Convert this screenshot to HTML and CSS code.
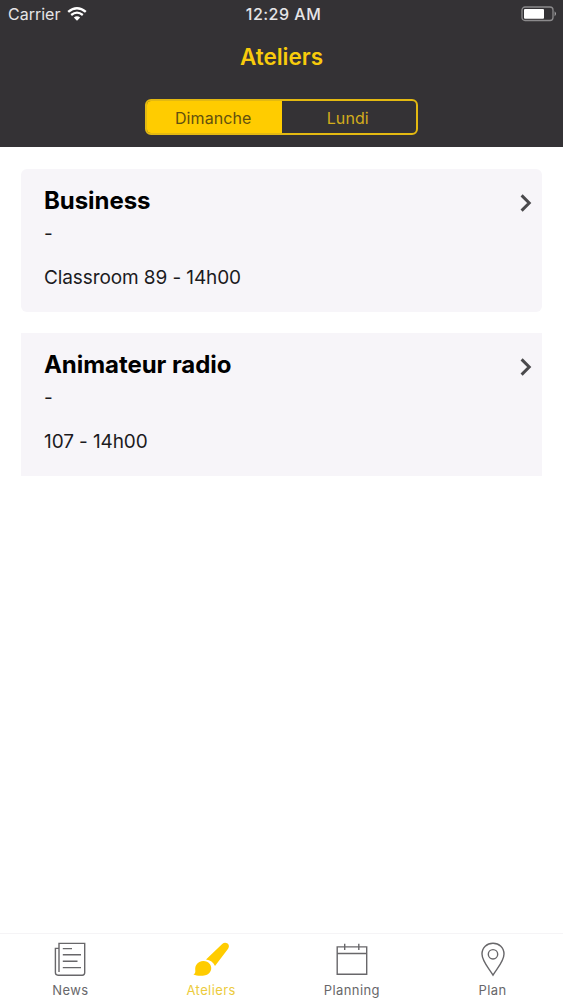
FILE: index.html
```html
<!DOCTYPE html>
<html lang="fr">

<head>
    <meta charset="UTF-8">
    <meta name="viewport" content="width=device-width, initial-scale=1.0">
    <title>Ateliers</title>
    <link rel="stylesheet" href="styles.css">
</head>

<body>
    <header>
        <div class="status">
            <div class="carrier">
                <span>Carrier</span>
                <svg width="20" height="14" viewBox="0 0 20 14">
                    <path d="M1.2 4.9 Q10 -2.3 18.8 4.9" fill="none" stroke="#fff" stroke-width="2.5" />
                    <path d="M4.2 8 Q10 3.3 15.8 8" fill="none" stroke="#fff" stroke-width="2.3" />
                    <path d="M6.8 10.5 Q10 8 13.2 10.5 L10 13.7 Z" fill="#fff" />
                </svg>
            </div>
            <span class="time">12:29 AM</span>
            <svg class="battery" width="36" height="16" viewBox="0 0 36 16">
                <rect x="1" y="1" width="31" height="13.5" rx="3" fill="none" stroke="#8b8a8c" stroke-width="1.3" />
                <rect x="3" y="3" width="20" height="9.8" rx="1" fill="#fff" />
                <path d="M33.6 5.3 Q36.4 7.8 33.6 10.4 Z" fill="#a5a4a6" />
            </svg>
        </div>
        <h1>Ateliers</h1>
        <div class="segments">
            <button class="active">Dimanche</button>
            <button>Lundi</button>
        </div>
    </header>

    <main>
        <article class="rounded">
            <div>
                <h2>Business</h2>
                <p class="speaker">-</p>
                <p class="place">Classroom 89 - 14h00</p>
            </div>
            <svg class="chevron" width="12" height="18" viewBox="0 0 12 18">
                <path d="M1.6 1.4 L9.2 9 L1.6 16.6" fill="none" stroke="#4a494c" stroke-width="3" />
            </svg>
        </article>
        <article>
            <div>
                <h2>Animateur radio</h2>
                <p class="speaker">-</p>
                <p class="place">107 - 14h00</p>
            </div>
            <svg class="chevron" width="12" height="18" viewBox="0 0 12 18">
                <path d="M1.6 1.4 L9.2 9 L1.6 16.6" fill="none" stroke="#4a494c" stroke-width="3" />
            </svg>
        </article>
    </main>

    <nav>
        <a>
            <svg width="40" height="40" viewBox="0 0 40 40">
                <path d="M9 32V3.4H34.7V32.8Q34.7 35.2 32.3 35.2H8Q5.4 35.2 5.4 32.6V8.4H9" />
                <path d="M12.8 8.6H22M12.8 14.8H31M12.8 21.2H27.5M12.8 27.6H31" />
            </svg>
            <span>News</span>
        </a>
        <a class="active">
            <svg width="40" height="40" viewBox="0 0 40 40">
                <path class="fill" d="M15 19.6 L31.2 4 C34.8 .8 40 4.7 37.1 8.7 L24 26 C22.4 22.4 19.2 20.2 15 19.6 Z" />
                <path class="fill" d="M2.4 34.5 C6.3 32.5 2.7 29.4 5.2 25 C8.4 19.7 15.8 19.9 19 24.2 C22 28.8 19.3 34.1 14.3 35.2 C9.8 36.2 5.7 35.8 2.4 34.5 Z" />
            </svg>
            <span>Ateliers</span>
        </a>
        <a>
            <svg width="40" height="40" viewBox="0 0 40 40">
                <path d="M5.2 6.9H34.7V34.3H5.2ZM5.2 13.5H34.7M12.7 3.7V10M26.8 3.7V10" />
            </svg>
            <span>Planning</span>
        </a>
        <a>
            <svg width="40" height="40" viewBox="0 0 40 40">
                <path d="M20 35.1 C16.5 29 9 21.5 9 14 C9 7.6 13.8 3.2 20 3.2 C26.2 3.2 31 7.6 31 14 C31 21.5 23.5 29 20 35.1 Z" />
                <circle cx="20" cy="14.3" r="4.7" />
            </svg>
            <span>Plan</span>
        </a>
    </nav>
</body>

</html>
```
FILE: styles.css
```css
* {
    box-sizing: border-box;
}

body {
    background-color: #fff;
    color: #000;
    display: flex;
    flex-direction: column;
    font-family: Inter, "Liberation Sans", sans-serif;
    height: 1000px;
    margin: 0;
}

h1,
h2,
p {
    margin: 0;
}

header {
    align-items: center;
    background-color: #343235;
    display: flex;
    flex-direction: column;
    height: 147px;
}

.status {
    align-items: center;
    color: #e6e5e7;
    display: grid;
    font-size: 16px;
    grid-template-columns: 1fr auto 1fr;
    height: 28px;
    padding: 0 6px 0 8px;
    width: 100%;
}

.carrier {
    align-items: center;
    display: flex;
    gap: 7px;
}

.time {
    font-weight: 500;
    letter-spacing: .5px;
    padding-left: 2px;
}

.battery {
    justify-self: end;
}

h1 {
    color: #f8cb0c;
    font-size: 22.5px;
    font-weight: 600;
    line-height: 28px;
    margin-top: 15px;
}

.segments {
    border: 2px solid #e3b911;
    border-radius: 6px;
    display: flex;
    height: 36px;
    margin-top: 28px;
    overflow: hidden;
    width: 273px;
}

.segments button {
    background: none;
    border: 0;
    color: #d3ad1c;
    flex: 1;
    font-family: inherit;
    font-size: 16px;
    letter-spacing: .1px;
    padding: 2px 2px 0 0;
}

.segments .active {
    background-color: #fc0;
    color: #62500f;
}

main {
    display: flex;
    flex: 1;
    flex-direction: column;
    gap: 21.5px;
    padding: 22px 21px;
}

article {
    background-color: #f7f5f9;
    display: flex;
    height: 142.5px;
    justify-content: space-between;
    padding: 17px 10px 0 23px;
}

.rounded {
    border-radius: 6px;
}

h2 {
    font-size: 24px;
    font-weight: 700;
    letter-spacing: -.05px;
    line-height: 30px;
}

.speaker,
.place {
    color: #1c1b1e;
    font-size: 19px;
    letter-spacing: -.1px;
    line-height: 24px;
}

.speaker {
    margin-top: 6px;
}

.place {
    margin-top: 20px;
}

.chevron {
    margin-top: 8px;
}

nav {
    border-top: 1px solid #f5f4f6;
    display: flex;
    height: 67px;
}

nav a {
    align-items: center;
    color: #68676a;
    display: flex;
    flex: 1;
    flex-direction: column;
    font-size: 13px;
    letter-spacing: .4px;
    line-height: 16px;
    padding-top: 6px;
}

nav span {
    margin-top: 2px;
}

nav path,
nav circle {
    fill: none;
    stroke: #68676a;
    stroke-width: 1.4;
}

nav .active {
    color: #eccb3c;
}

nav .fill {
    fill: #fc0;
    stroke: none;
}
```
